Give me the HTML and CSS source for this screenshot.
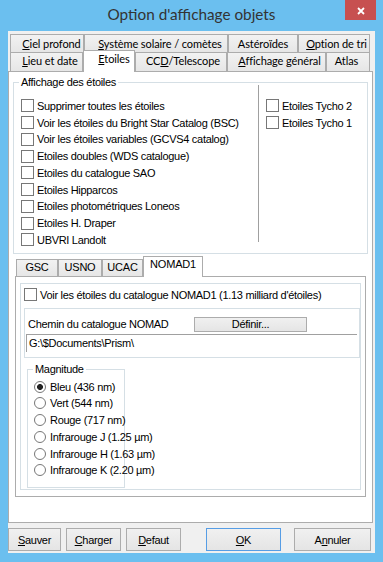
FILE: index.html
```html
<!DOCTYPE html>
<html>
<head>
<meta charset="UTF-8">
<title>Option d'affichage objets</title>
<link rel="stylesheet" href="styles.css">
</head>
<body>
<div class="window">
  <div class="titlebar">
    <span></span>
    <span class="title">Option d'affichage objets</span>
    <span class="close"><svg width="8" height="8" viewBox="0 0 8 8"><path d="M1 1L7 7M7 1L1 7" stroke="#fff" stroke-width="1.8"/></svg></span>
  </div>
  <div class="client">
    <div class="tabrow row1">
      <div class="tab w-ciel"><u>C</u>iel profond</div>
      <div class="tab w-sys"><u>S</u>ystème solaire / comètes</div>
      <div class="tab w-ast">Astéroïdes</div>
      <div class="tab w-tri"><u>O</u>ption de tri</div>
    </div>
    <div class="tabrow row2">
      <div class="tab w-lieu"><u>L</u>ieu et date</div>
      <div class="tab w-etoiles active"><u>E</u>toiles</div>
      <div class="tab w-ccd">CC<u>D</u>/Telescope</div>
      <div class="tab w-aff"><u>A</u>ffichage général</div>
      <div class="tab w-atlas">Atlas</div>
    </div>
    <div class="page">
      <div class="group stars">
        <div class="group-label">Affichage des étoiles</div>
        <div class="stars-body">
          <div class="col col-left">
            <div class="check"><span class="box"></span>Supprimer toutes les étoiles</div>
            <div class="check"><span class="box"></span>Voir les étoiles du Bright Star Catalog (BSC)</div>
            <div class="check"><span class="box"></span>Voir les étoiles variables (GCVS4 catalog)</div>
            <div class="check"><span class="box"></span>Etoiles doubles (WDS catalogue)</div>
            <div class="check"><span class="box"></span>Etoiles du catalogue SAO</div>
            <div class="check"><span class="box"></span>Etoiles Hipparcos</div>
            <div class="check"><span class="box"></span>Etoiles photométriques Loneos</div>
            <div class="check"><span class="box"></span>Etoiles H. Draper</div>
            <div class="check"><span class="box"></span>UBVRI Landolt</div>
          </div>
          <div class="sep"></div>
          <div class="col col-right">
            <div class="check"><span class="box"></span>Etoiles Tycho 2</div>
            <div class="check"><span class="box"></span>Etoiles Tycho 1</div>
          </div>
        </div>
      </div>

      <div class="subtabs">
        <div class="tabrow small">
          <div class="stab w-gsc">GSC</div>
          <div class="stab w-usno">USNO</div>
          <div class="stab w-ucac">UCAC</div>
          <div class="stab w-nomad active">NOMAD1</div>
        </div>
        <div class="subpage">
          <div class="panel">
            <div class="check nomad"><span class="box"></span>Voir les étoiles du catalogue NOMAD1 (1.13 milliard d'étoiles)</div>
            <div class="panel path">
              <div class="path-row">
                <span class="path-label">Chemin du catalogue NOMAD</span>
                <button class="btn btn-def">Définir...</button>
              </div>
              <div class="field">G:\$Documents\Prism\</div>
            </div>
            <div class="group magnitude">
              <div class="group-label">Magnitude</div>
              <div class="radios">
                <div class="radio"><span class="dot on"></span>Bleu (436 nm)</div>
                <div class="radio"><span class="dot"></span>Vert (544 nm)</div>
                <div class="radio"><span class="dot"></span>Rouge (717 nm)</div>
                <div class="radio"><span class="dot"></span>Infrarouge J (1.25 µm)</div>
                <div class="radio"><span class="dot"></span>Infrarouge H (1.63 µm)</div>
                <div class="radio"><span class="dot"></span>Infrarouge K (2.20 µm)</div>
              </div>
            </div>
          </div>
        </div>
      </div>
    </div>

    <div class="buttons">
      <button class="btn b-sauver"><u>S</u>auver</button>
      <button class="btn b-charger"><u>C</u>harger</button>
      <button class="btn b-defaut"><u>D</u>efaut</button>
      <button class="btn b-ok default"><u>O</u>K</button>
      <button class="btn b-annuler">A<u>n</u>nuler</button>
    </div>
  </div>
</div>
</body>
</html>
```

FILE: styles.css
```css
body {
margin: 0;
background-color: #6BBFEF;
font-family: "Liberation Sans", Arial, sans-serif;
font-size: 11px;
color: #000;
}
.window {
width: 383px;
height: 562px;
background-color: #6BBFEF;
}

/* title bar */
.titlebar {
height: 31px;
display: grid;
grid-template-columns: 1fr auto 1fr;
align-items: start;
}
.title {
font-family: Lato, "Open Sans", sans-serif;
font-size: 15.3px;
line-height: 20px;
padding-top: 4px;
color: #333;
white-space: nowrap;
}
.close {
justify-self: end;
margin-right: 7px;
width: 31px;
height: 20px;
background-color: #C75050;
display: flex;
align-items: center;
justify-content: center;
padding-top: 1px;
box-sizing: border-box;
}

/* client area */
.client {
margin-left: 8px;
width: 367px;
height: 522px;
background-color: #F0F0F0;
padding-top: 3px;
box-sizing: border-box;
}

/* tabs */
.tabrow {
display: flex;
align-items: flex-start;
}
.row1 { padding-left: 2px; height: 18px; }
.row2 { padding-left: 2px; height: 19px; }
.tab {
box-sizing: border-box;
border: 1px solid #ACACAC;
border-bottom: none;
background: linear-gradient(#F2F2F2, #E6E6E6);
font-family: Lato, "Open Sans", sans-serif;
font-size: 11px;
letter-spacing: -0.1px;
line-height: 16px;
text-align: center;
white-space: nowrap;
}
.row1 .tab { height: 18px; padding-top: 1px; }
.row2 .tab { height: 19px; }
.row2 .tab.active {
height: 22px;
margin-top: -2px;
margin-bottom: -1px;
background: #FFF;
position: relative;
z-index: 1;
}
.w-ciel { width: 74px; padding-left: 9px; }
.w-sys { width: 144px; padding-left: 8px; }
.w-ast { width: 70px; }
.w-tri { width: 72px; padding-left: 5px; }
.w-lieu { width: 73px; padding-left: 7px; }
.w-etoiles { width: 52px; padding-left: 10px; }
.w-ccd { width: 92px; padding-left: 4px; }
.w-aff { width: 99px; padding-left: 6px; }
.w-atlas { width: 44px; padding-right: 3px; }

.page {
width: 365px;
height: 452px;
box-sizing: border-box;
border: 1px solid #ACACAC;
background-color: #FFF;
padding: 0 4px;
}

/* group boxes */
.group {
border: 1px solid #D5DFE5;
}
.group-label {
width: fit-content;
margin: -7px 0 0 5px;
padding: 0 2px;
line-height: 13px;
background-color: #FFF;
letter-spacing: -0.3px;
}
.stars { margin-top: 10px; }
.stars-body {
display: flex;
align-items: flex-start;
margin-top: -4px;
}
.col-left {
width: 244px;
box-sizing: border-box;
padding: 12.5px 0 4.5px 7px;
}
.col-right {
padding: 12.5px 0 0 7px;
}
.sep {
width: 1px;
height: 157px;
background-color: #A0A0A0;
}

.check, .radio {
display: flex;
align-items: center;
height: 16.75px;
white-space: nowrap;
letter-spacing: -0.3px;
}
.box {
width: 13px;
height: 13px;
box-sizing: border-box;
border: 1px solid #777;
background-color: #FFF;
margin-right: 3px;
flex: none;
}
.dot {
width: 12px;
height: 12px;
box-sizing: border-box;
border: 1px solid #777;
border-radius: 50%;
background-color: #FFF;
margin-right: 4px;
flex: none;
}
.dot.on {
background: radial-gradient(circle, #222 0, #222 2.6px, #FFF 3.3px);
}

/* NOMAD sub tabs */
.subtabs { margin: 5px 2px 0 2px; }
.small { padding-left: 1px; height: 17px; }
.stab {
box-sizing: border-box;
height: 17px;
border: 1px solid #ACACAC;
border-bottom: none;
background: linear-gradient(#F2F2F2, #E6E6E6);
line-height: 15px;
text-align: center;
letter-spacing: -0.2px;
}
.stab.active {
height: 21px;
margin-top: -3px;
margin-bottom: -1px;
background: #FFF;
position: relative;
z-index: 1;
}
.w-gsc { width: 42px; }
.w-usno { width: 44px; }
.w-ucac { width: 41px; }
.w-nomad { width: 60px; }

.subpage {
height: 221px;
box-sizing: border-box;
border: 1px solid #ACACAC;
background-color: #FFF;
padding: 6px 4px 0 4px;
}
.panel {
border: 1px solid #D5DFE5;
padding: 0 0 1px 3px;
}
.nomad {
margin-top: 3px;
height: 16px;
}
.panel.path {
margin-top: 5px;
padding: 0 0 5px 0;
}
.path-row {
display: flex;
align-items: center;
margin-top: 8px;
height: 15px;
padding-left: 3px;
letter-spacing: -0.3px;
}
.path-label { width: 166px; }
.field {
margin: 2px 0 0 1px;
width: 331px;
height: 18px;
box-sizing: border-box;
border-top: 1px solid #A0A0A0;
border-left: 1px solid #A0A0A0;
padding-left: 2px;
line-height: 16px;
letter-spacing: -0.3px;
}

.magnitude {
margin: 11px 0 0 3px;
width: 98px;
box-sizing: border-box;
}
.radios {
padding: 2.6px 0 7.9px 6px;
}

/* buttons */
.btn {
box-sizing: border-box;
border: 1px solid #ACACAC;
background: linear-gradient(#F0F0F0, #E5E5E5);
font-family: "Liberation Sans", Arial, sans-serif;
font-size: 11px;
letter-spacing: -0.3px;
color: #000;
padding: 0;
margin: 0;
}
.btn-def {
width: 113px;
height: 15px;
line-height: 13px;
}
.buttons {
display: flex;
margin-top: 5px;
height: 23px;
}
.buttons .btn { height: 23px; }
.b-sauver { width: 53px; }
.b-charger { width: 55px; margin-left: 5px; }
.b-defaut { width: 55px; margin-left: 5px; }
.b-ok { width: 75px; margin-left: 25px; }
.b-annuler { width: 77px; margin-left: 13px; }
.btn.default { border-color: #569DE5; }
```
